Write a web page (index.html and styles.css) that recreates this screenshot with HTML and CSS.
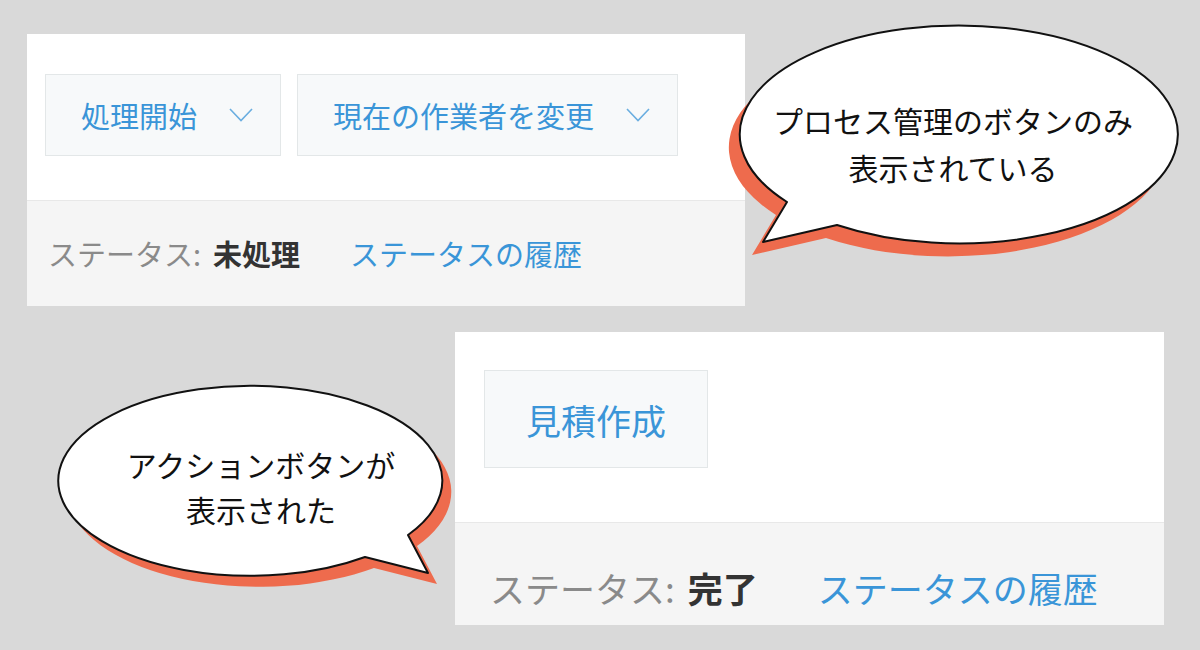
FILE: index.html
```html
<!DOCTYPE html>
<html lang="ja">
<head>
    <meta charset="UTF-8">
    <meta name="viewport" content="width=device-width, initial-scale=1.0">
    <title>プロセス管理の表示</title>
    <link rel="stylesheet" href="styles.css">
</head>
<body>
    <div class="scene">
        <!-- before: only the process buttons -->
        <section class="panel panel-top">
            <div class="panel-body">
                <button class="btn">処理開始
                    <svg class="chevron" viewBox="0 0 24 14"><path d="M1 1 L12 12.5 L23 1"/></svg>
                </button>
                <button class="btn">現在の作業者を変更
                    <svg class="chevron" viewBox="0 0 24 14"><path d="M1 1 L12 12.5 L23 1"/></svg>
                </button>
            </div>
            <div class="panel-footer">
                <span class="status-label">ステータス:</span>
                <strong class="status-value">未処理</strong>
                <a class="status-link" href="#">ステータスの履歴</a>
            </div>
        </section>

        <!-- after: action button shown -->
        <section class="panel panel-bottom">
            <div class="panel-body">
                <button class="btn btn-action">見積作成</button>
            </div>
            <div class="panel-footer">
                <span class="status-label">ステータス:</span>
                <strong class="status-value">完了</strong>
                <a class="status-link" href="#">ステータスの履歴</a>
            </div>
        </section>

        <div class="bubble bubble-top">
            <svg class="bubble-shape" width="475" height="250" viewBox="0 0 475 250">
                <path class="bubble-shadow" transform="translate(-11 13)" d="M67,187 A219,109 0 1 1 117,210 L43,227 Z"/>
                <path class="bubble-fill" d="M67,187 A219,109 0 1 1 117,210 L43,227 Z"/>
            </svg>
            <p class="bubble-text">プロセス管理のボタンのみ<br>表示されている</p>
        </div>

        <div class="bubble bubble-bottom">
            <svg class="bubble-shape" width="420" height="220" viewBox="0 0 420 220">
                <path class="bubble-shadow" transform="translate(9 11)" d="M353,160 A192,95 0 1 0 310,182 L373,198 Z"/>
                <path class="bubble-fill" d="M353,160 A192,95 0 1 0 310,182 L373,198 Z"/>
            </svg>
            <p class="bubble-text">アクションボタンが<br>表示された</p>
        </div>
    </div>
</body>
</html>
```

FILE: styles.css
```css
body { margin: 0; font-family: "Noto Sans CJK JP", "Noto Sans", sans-serif; background: #d9d9d9; }
.scene { position: relative; width: 1200px; height: 650px; overflow: hidden; background: #d9d9d9; }

.panel { background: #fff; display: flex; flex-direction: column; }
.panel-body { display: flex; gap: 16px; box-sizing: border-box; }
.panel-footer { display: flex; align-items: center; box-sizing: border-box; background: #f5f5f5; border-top: 1px solid #e8e8e8; white-space: nowrap; }

.btn { display: flex; align-items: center; justify-content: center; box-sizing: border-box; background: #f7f9fa; border: 1px solid #e3e7e8; color: #3a95d8; font-family: inherit; padding: 0; cursor: pointer; }
.chevron { width: 24px; height: 14px; fill: none; stroke: #6aaee0; stroke-width: 1.6; }

.status-label { color: #8a8a8a; }
.status-value { color: #333; font-weight: bold; }
.status-link { color: #3a95d8; text-decoration: none; }

/* top panel */
.panel-top { margin: 34px 0 0 27px; width: 718px; height: 272px; }
.panel-top .panel-body { height: 166px; padding: 40px 0 0 18px; }
.panel-top .btn { height: 82px; padding: 0 27px 0 35px; gap: 32px; font-size: 29px; line-height: 1; }
.panel-top .panel-footer { flex: 1; padding: 0 0 0 21px; font-size: 29px; line-height: 1; }
.panel-top .status-value { margin-left: 12px; }
.panel-top .status-link { margin-left: 50px; }

/* bottom panel */
.panel-bottom { margin: 26px 0 0 455px; width: 709px; height: 293px; }
.panel-bottom .panel-body { height: 190px; padding: 38px 0 0 29px; }
.btn-action { width: 224px; height: 98px; font-size: 35px; line-height: 1; }
.panel-bottom .panel-footer { flex: 1; align-items: flex-start; padding: 47px 0 0 35px; font-size: 35px; line-height: 1; }
.panel-bottom .status-value { margin-left: 13px; }
.panel-bottom .status-link { margin-left: 60px; }

/* speech bubbles */
.bubble { position: absolute; z-index: 2; }
.bubble-shape { position: absolute; left: 0; top: 0; }
.bubble-shadow { fill: #ee6b4d; }
.bubble-fill { fill: #fff; stroke: #111; stroke-width: 2; stroke-linejoin: round; }
.bubble-text { position: absolute; margin: 0; text-align: center; color: #111; font-size: 30px; white-space: nowrap; }

.bubble-top { left: 720px; top: 15px; width: 475px; height: 250px; }
.bubble-top .bubble-text { left: 33px; width: 400px; top: 82px; line-height: 47px; }

.bubble-bottom { left: 55px; top: 375px; width: 420px; height: 220px; }
.bubble-bottom .bubble-text { left: 6px; width: 400px; top: 67px; line-height: 45px; }
```
